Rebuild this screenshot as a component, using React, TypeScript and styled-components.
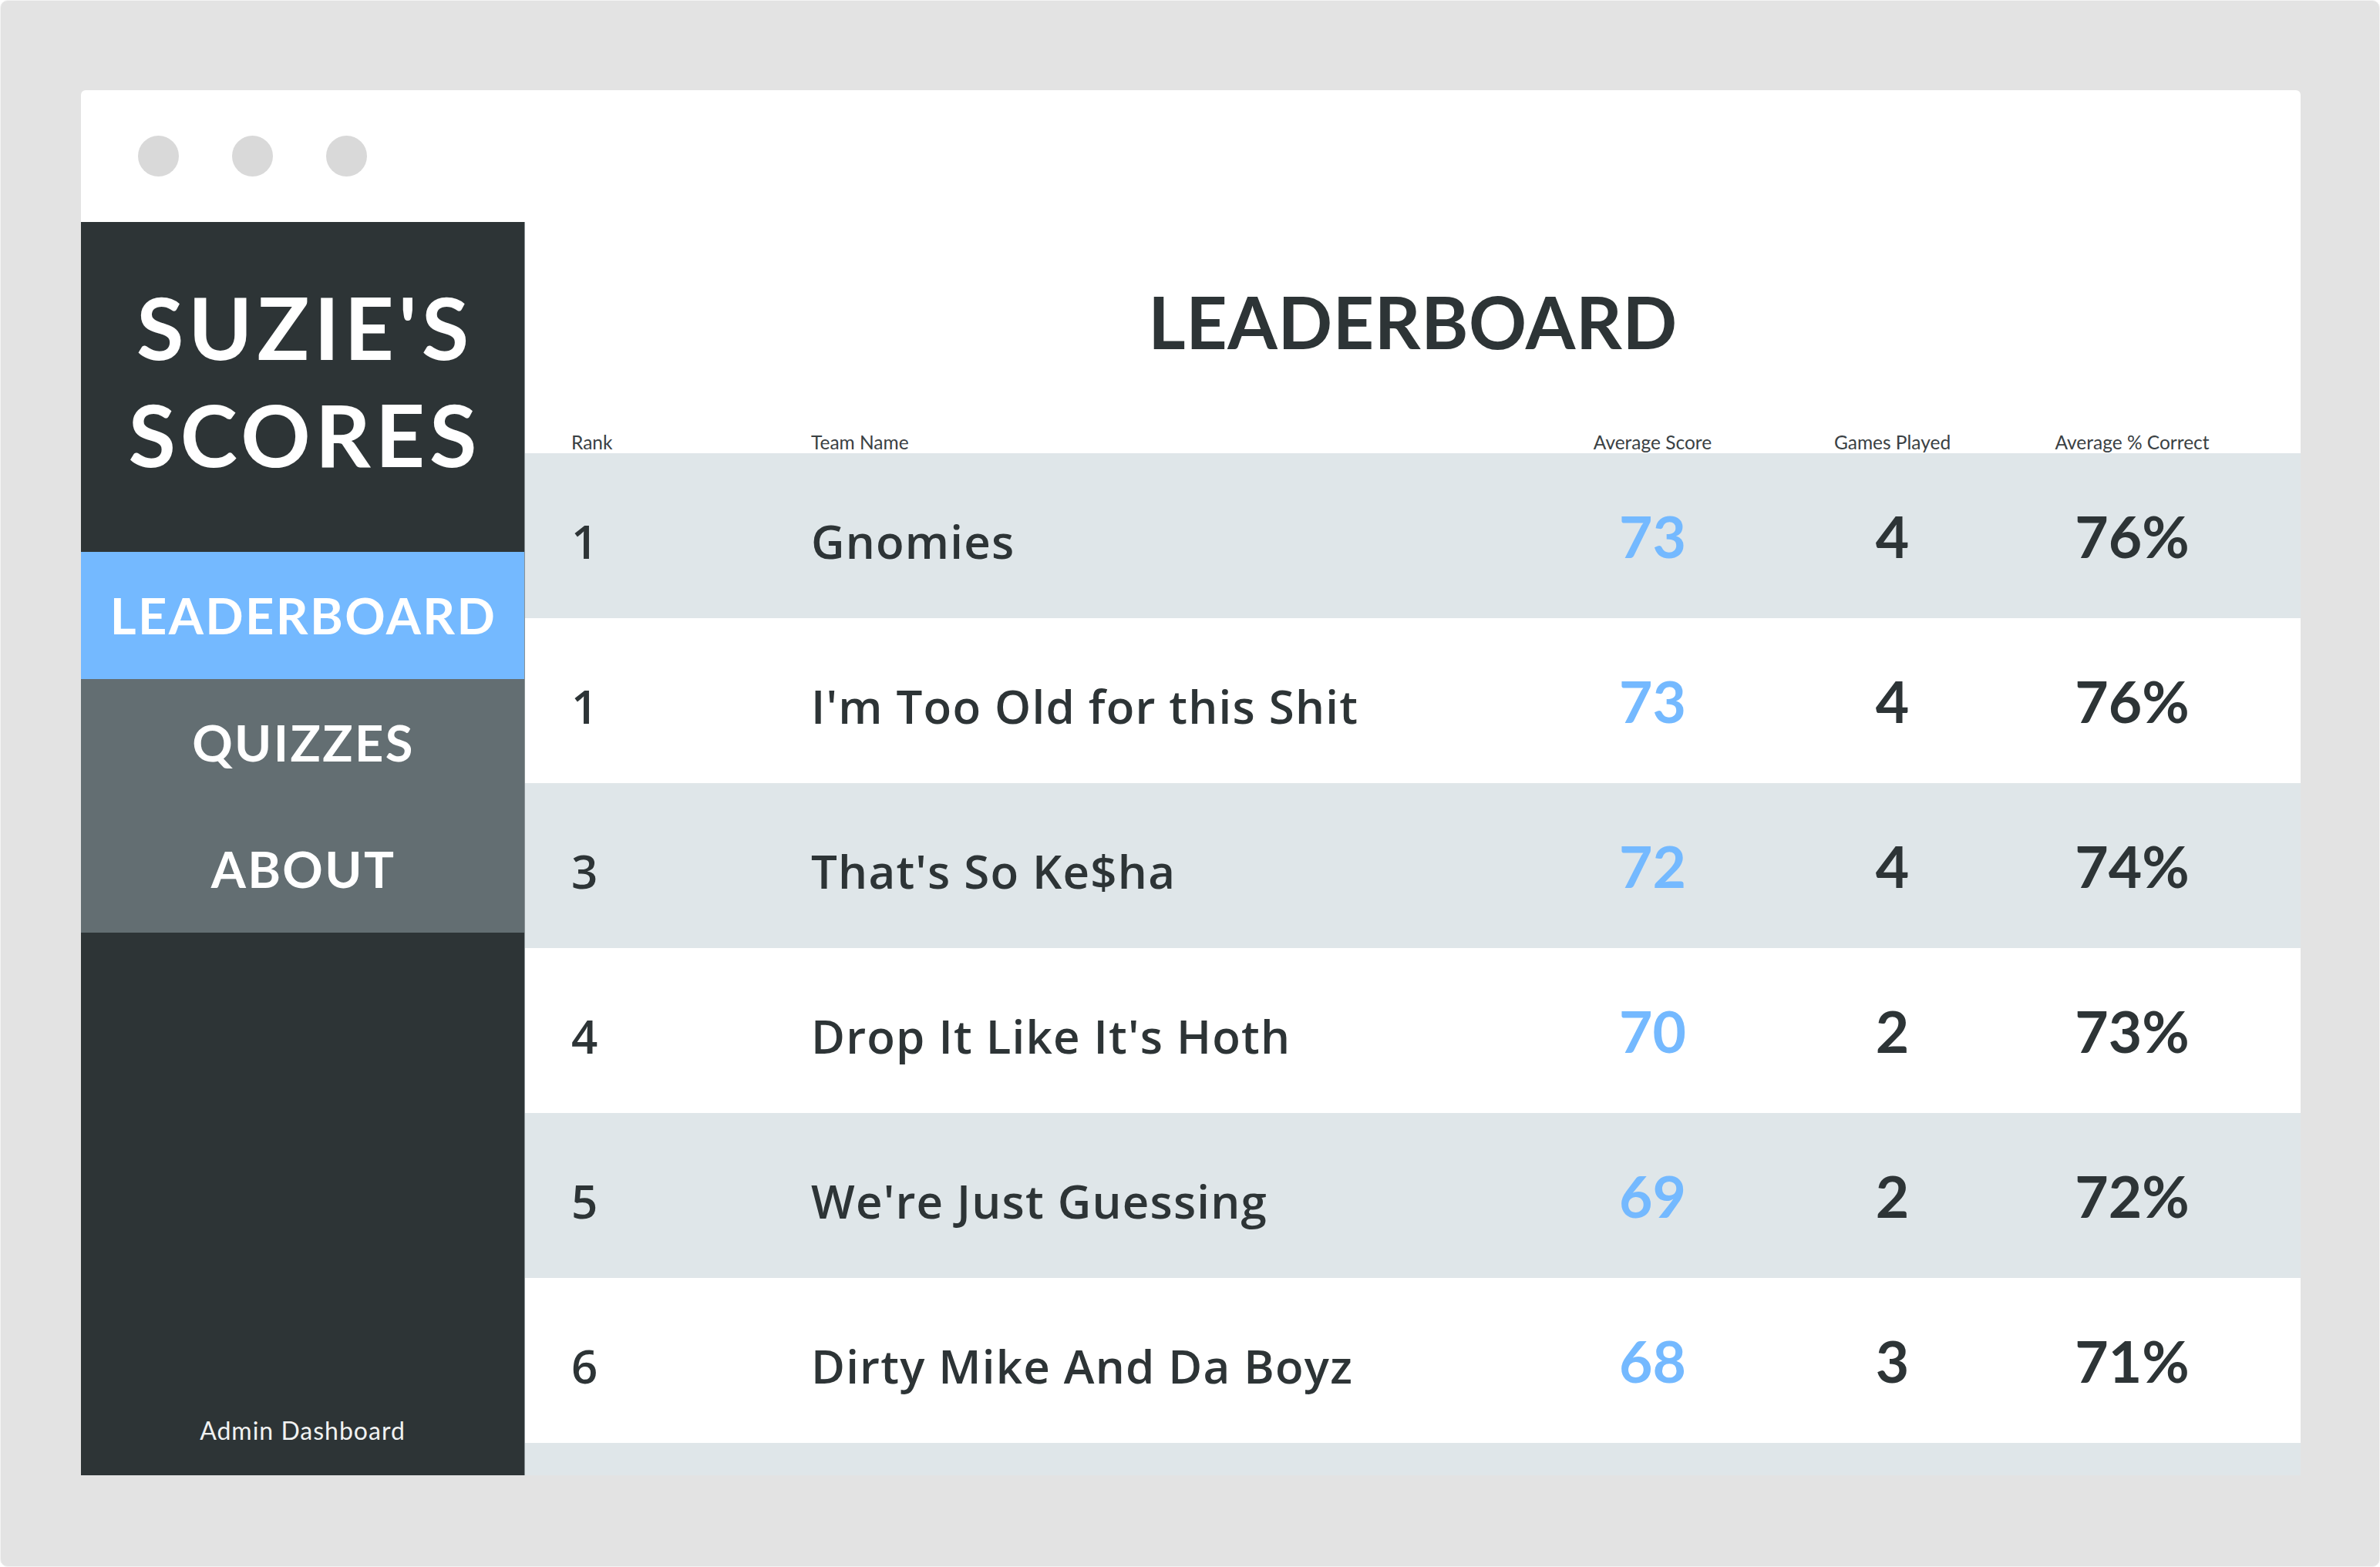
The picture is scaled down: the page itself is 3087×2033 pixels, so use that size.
import React from "react";
import styled, { createGlobalStyle } from "styled-components";

const GlobalStyle = createGlobalStyle`
  html, body {
    margin: 0;
    padding: 0;
    background: #ffffff;
  }
  * { box-sizing: border-box; }
  #root { width: 3087px; height: 2033px; }
`;

const Page = styled.div`
  width: 3087px;
  height: 2033px;
  padding: 116px 102px 118px 104px;
  background: #e3e3e3;
  border-radius: 10px;
  border: 1px solid #f4f4f4;
  font-family: "Lato", "Open Sans", sans-serif;
  color: #2d3436;
`;

const Window = styled.div`
  width: 100%;
  height: 100%;
  background: #ffffff;
  border-radius: 6px 6px 0 0;
  display: flex;
  flex-direction: column;
  overflow: hidden;
`;

const TitleBar = styled.div`
  height: 171px;
  flex: 0 0 171px;
  display: flex;
  align-items: center;
  gap: 69px;
  padding-left: 74px;
`;

const Dot = styled.span`
  width: 53px;
  height: 53px;
  border-radius: 50%;
  background: #d9d9d9;
`;

const Body = styled.div`
  flex: 1;
  min-height: 0;
  display: flex;
`;

const Sidebar = styled.aside`
  width: 576px;
  flex: 0 0 576px;
  background: #2d3436;
  border-right: 1px solid #8a9295;
  display: flex;
  flex-direction: column;
`;

const Brand = styled.div`
  height: 428px;
  flex: 0 0 428px;
  padding-top: 66px;
  text-align: center;
`;

const BrandLine = styled.div`
  font-family: "Lato", sans-serif;
  font-weight: 700;
  font-size: 112px;
  line-height: 139px;
  letter-spacing: 6px;
  color: #ffffff;
  padding-left: 6px;
`;

const NavItem = styled.div<{ $active?: boolean }>`
  height: 164.5px;
  flex: 0 0 164.5px;
  display: flex;
  align-items: center;
  justify-content: center;
  background: ${(p) => (p.$active ? "#74b9ff" : "#636e72")};
  color: #ffffff;
  font-family: "Lato", sans-serif;
  font-weight: 700;
  font-size: 65px;
  line-height: 1.2;
  letter-spacing: 2.4px;
  padding-left: 2px;
`;

const Footer = styled.div`
  margin-top: auto;
  padding-bottom: 39px;
  text-align: center;
  color: #f1f2f2;
  font-family: "Lato", sans-serif;
  font-size: 32px;
  line-height: 1.2;
  letter-spacing: 1px;
`;

const Main = styled.main`
  flex: 1;
  min-width: 0;
  display: flex;
  flex-direction: column;
  overflow: hidden;
  padding-top: 74px;
`;

const Heading = styled.h1`
  margin: 0 0 88px 0;
  text-align: center;
  font-family: "Lato", sans-serif;
  font-weight: 700;
  font-size: 93px;
  line-height: 1.2;
  letter-spacing: 0.6px;
  color: #2d3436;
`;

const columns = "311px 1fr 311px 311px 311px";

const HeaderRow = styled.div`
  display: grid;
  grid-template-columns: ${columns};
  padding: 0 63px 0 60px;
  font-family: "Lato", sans-serif;
  font-size: 24.5px;
  line-height: 1.2;
  margin-top: -3px;
  color: #3a4144;
`;

const HeaderCell = styled.div<{ $center?: boolean }>`
  text-align: ${(p) => (p.$center ? "center" : "left")};
`;

const Row = styled.div<{ $shaded: boolean }>`
  display: grid;
  grid-template-columns: ${columns};
  align-items: center;
  height: 214px;
  flex: 0 0 214px;
  padding: 0 63px 0 60px;
  background: ${(p) => (p.$shaded ? "#dfe6e9" : "#ffffff")};
`;

const TextCell = styled.div`
  font-family: "Open Sans", sans-serif;
  font-weight: 600;
  font-size: 60px;
  line-height: 1.36;
  letter-spacing: 1.2px;
  padding-top: 16px;
  color: #2d3436;
  white-space: nowrap;
`;

const NumCell = styled.div<{ $blue?: boolean }>`
  text-align: center;
  font-family: "Lato", sans-serif;
  font-weight: 700;
  font-size: 75px;
  line-height: 1.2;
  color: ${(p) => (p.$blue ? "#74b9ff" : "#2d3436")};
`;

type Team = {
  rank: number;
  name: string;
  avg: number;
  games: number;
  pct: string;
};

const teams: Team[] = [
  { rank: 1, name: "Gnomies", avg: 73, games: 4, pct: "76%" },
  { rank: 1, name: "I'm Too Old for this Shit", avg: 73, games: 4, pct: "76%" },
  { rank: 3, name: "That's So Ke$ha", avg: 72, games: 4, pct: "74%" },
  { rank: 4, name: "Drop It Like It's Hoth", avg: 70, games: 2, pct: "73%" },
  { rank: 5, name: "We're Just Guessing", avg: 69, games: 2, pct: "72%" },
  { rank: 6, name: "Dirty Mike And Da Boyz", avg: 68, games: 3, pct: "71%" },
];

export default function App() {
  return (
    <>
      <GlobalStyle />
      <Page>
        <Window>
          <TitleBar>
            <Dot />
            <Dot />
            <Dot />
          </TitleBar>
          <Body>
            <Sidebar>
              <Brand>
                <BrandLine>SUZIE'S</BrandLine>
                <BrandLine>SCORES</BrandLine>
              </Brand>
              <NavItem $active>LEADERBOARD</NavItem>
              <NavItem>QUIZZES</NavItem>
              <NavItem>ABOUT</NavItem>
              <Footer>Admin Dashboard</Footer>
            </Sidebar>
            <Main>
              <Heading>LEADERBOARD</Heading>
              <HeaderRow>
                <HeaderCell>Rank</HeaderCell>
                <HeaderCell>Team Name</HeaderCell>
                <HeaderCell $center>Average Score</HeaderCell>
                <HeaderCell $center>Games Played</HeaderCell>
                <HeaderCell $center>Average % Correct</HeaderCell>
              </HeaderRow>
              {teams.map((t, i) => (
                <Row key={i} $shaded={i % 2 === 0}>
                  <TextCell>{t.rank}</TextCell>
                  <TextCell>{t.name}</TextCell>
                  <NumCell $blue>{t.avg}</NumCell>
                  <NumCell>{t.games}</NumCell>
                  <NumCell>{t.pct}</NumCell>
                </Row>
              ))}
              <Row $shaded />
            </Main>
          </Body>
        </Window>
      </Page>
    </>
  );
}
